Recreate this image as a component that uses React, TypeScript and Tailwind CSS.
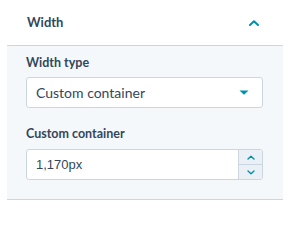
import React from 'react';

const App: React.FC = () => {
  return (
    <div className="w-[290px] h-[249px] bg-white pt-0 text-[#33475b]" style={{ fontFamily: 'Lato, "Open Sans", sans-serif' }}>
      <div className="mx-[7px]">
        {/* Header */}
        <div className="h-[46px] flex items-center justify-between pl-[20px] pr-[24px] border-b border-[#cbd6e2]">
          <span className="text-[13px] font-bold leading-none">Width</span>
          <svg width="10" height="6" viewBox="0 0 10 6" className="text-[#0091ae]">
            <path d="M1 5 L5 1.2 L9 5" fill="none" stroke="currentColor" strokeWidth="2" strokeLinecap="round" strokeLinejoin="round" />
          </svg>
        </div>

        {/* Body */}
        <div className="bg-[#f5f8fa] border-b border-[#cbd6e2] pl-[19px] pr-[20px] pt-[9px] pb-[19px]">
          <div className="text-[12.5px] font-bold h-[16px] leading-[16px]">Width type</div>
          <div className="mt-[6px] h-[31px] bg-white border border-[#cbd6e2] rounded-[3px] flex items-center justify-between pl-[9px] pr-[13px]">
            <span className="text-[14px]">Custom container</span>
            <svg width="10" height="5" viewBox="0 0 10 5" className="text-[#0091ae]">
              <path d="M0.5 0.5 H9.5 L5 4.8 Z" fill="currentColor" />
            </svg>
          </div>

          <div className="mt-[18px] text-[12.5px] font-bold h-[16px] leading-[16px]">Custom container</div>
          <div className="mt-[7px] h-[31px] bg-white border border-[#cbd6e2] rounded-[3px] flex overflow-hidden">
            <div className="flex-1 flex items-center pl-[9px] text-[13px]" style={{ fontFamily: '"Liberation Sans", Arial, sans-serif' }}>
              1,170px
            </div>
            <div className="w-[24px] flex flex-col border-l border-[#cbd6e2] bg-[#eaf0f6]">
              <div className="flex-1 flex items-center justify-center border-b border-[#cbd6e2]">
                <svg width="8" height="5" viewBox="0 0 8 5" className="text-[#0091ae]">
                  <path d="M1 4 L4 1.2 L7 4" fill="none" stroke="currentColor" strokeWidth="1.4" strokeLinecap="round" strokeLinejoin="round" />
                </svg>
              </div>
              <div className="flex-1 flex items-center justify-center">
                <svg width="8" height="5" viewBox="0 0 8 5" className="text-[#0091ae]">
                  <path d="M1 1 L4 3.8 L7 1" fill="none" stroke="currentColor" strokeWidth="1.4" strokeLinecap="round" strokeLinejoin="round" />
                </svg>
              </div>
            </div>
          </div>
        </div>
      </div>
    </div>
  );
};

export default App;
